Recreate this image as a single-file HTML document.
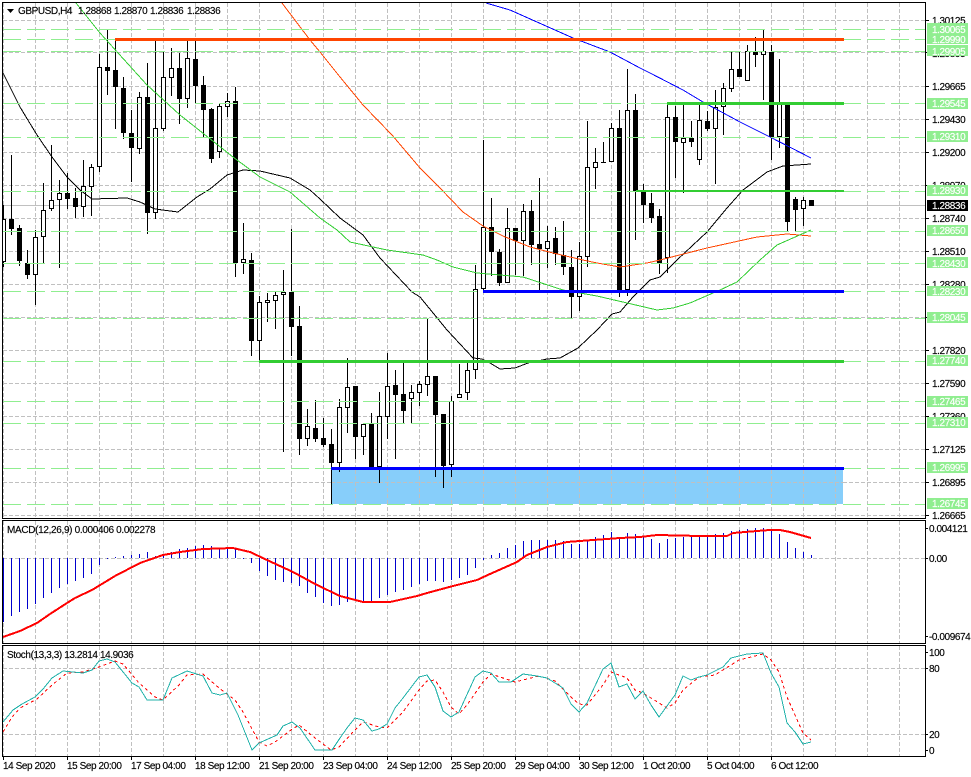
<!DOCTYPE html>
<html><head><meta charset="utf-8"><title>GBPUSD,H4</title>
<style>
html,body{margin:0;padding:0;background:#fff;width:971px;height:777px;overflow:hidden}
svg{display:block}
text{font-family:"Liberation Sans",sans-serif;font-size:10px;letter-spacing:-.42px;fill:#000;stroke:#000;stroke-width:.15}
.c{shape-rendering:crispEdges}
.g{stroke:#c0c0c0;stroke-width:1;stroke-dasharray:4 2;fill:none}
.l{stroke:#90ee90;stroke-width:1;stroke-dasharray:18 6;fill:none}
.m{fill:none;stroke-width:1;stroke-linejoin:round;shape-rendering:crispEdges}
text.w{fill:#fff;stroke:#fff}
</style></head><body>
<svg width="971" height="777" viewBox="0 0 971 777" xmlns="http://www.w3.org/2000/svg">
<defs>
<clipPath id="a"><rect x="3" y="3" width="922" height="515"/></clipPath>
<clipPath id="b"><rect x="3" y="521" width="922" height="122"/></clipPath>
<clipPath id="d"><rect x="3" y="646" width="922" height="110"/></clipPath>
</defs>

<!-- main grid -->
<g class="c">
<path class="g" d="M3 20.5H925M3 52.5H925M3 86.5H925M3 119.5H925M3 152.5H925M3 185.5H925M3 218.5H925M3 251.5H925M3 284.5H925M3 317.5H925M3 350.5H925M3 383.5H925M3 416.5H925M3 449.5H925M3 482.5H925M3 515.5H925"/>
<path class="g" d="M3.5 3V518M35.5 3V518M67.5 3V518M99.5 3V518M131.5 3V518M163.5 3V518M195.5 3V518M227.5 3V518M259.5 3V518M291.5 3V518M323.5 3V518M355.5 3V518M387.5 3V518M419.5 3V518M451.5 3V518M483.5 3V518M515.5 3V518M547.5 3V518M579.5 3V518M611.5 3V518M643.5 3V518M675.5 3V518M707.5 3V518M739.5 3V518M771.5 3V518M803.5 3V518M835.5 3V518M867.5 3V518M899.5 3V518"/>
<path d="M3 205.5H925" stroke="#c0c0c0" fill="none"/>
<rect x="331" y="470" width="512" height="34" fill="#87cefa"/>
<path d="M331 482.5H843" stroke="#c0c0c0" stroke-dasharray="4 2" fill="none"/>
<path d="M355.5 470V504M387.5 470V504M419.5 470V504M451.5 470V504M483.5 470V504M515.5 470V504M547.5 470V504M579.5 470V504M611.5 470V504M643.5 470V504M675.5 470V504M707.5 470V504M739.5 470V504M771.5 470V504M803.5 470V504M835.5 470V504" stroke="#c0c0c0" stroke-dasharray="4 2" fill="none"/>
</g>

<!-- candles -->
<g clip-path="url(#a)" class="c">
<path fill="none" stroke="#000" d="M3.5 205V267M11.5 155V235M19.5 225V266M27.5 250V279M35.5 230V305M43.5 183V263M51.5 145V211M59.5 180V268M67.5 173V209M75.5 188V218M83.5 160V217M91.5 164V216M99.5 54V172M107.5 30V95M115.5 39V129M123.5 77V139M131.5 110V182M139.5 92V154M147.5 63V234M155.5 40V219M163.5 52V131M171.5 48V96M179.5 53V124M187.5 39V108M195.5 40V103M203.5 76V137M211.5 108V163M219.5 103V158M227.5 93V117M235.5 87V277M243.5 223V274M251.5 253V356M259.5 296V361M267.5 293V322M275.5 292V329M283.5 270V452M291.5 229V356M299.5 306V455M307.5 409V446M315.5 400V442M323.5 418V447M331.5 429V504M339.5 399V472M347.5 358V433M355.5 386V459M363.5 424V455M371.5 413V467M379.5 392V483M387.5 353V439M395.5 370V459M403.5 363V423M411.5 385V423M419.5 381V406M427.5 319V396M435.5 376V477M443.5 414V488M451.5 396V477M459.5 364V398M467.5 363V400M475.5 265V379M483.5 140V293M491.5 198V276M499.5 249V286M507.5 208V283M515.5 228V275M523.5 204V276M531.5 200V265M539.5 178V293M547.5 226V268M555.5 227V265M563.5 221V275M571.5 250V318M579.5 242V311M587.5 121V267M595.5 148V189M603.5 142V163M611.5 123V162M619.5 110V297M627.5 69V296M635.5 94V240M643.5 184V223M651.5 193V223M659.5 209V274M667.5 103V273M675.5 106V178M683.5 105V193M691.5 121V147M699.5 102V165M707.5 111V131M715.5 90V184M723.5 83V135M731.5 52V92M739.5 52V77M747.5 45V81M755.5 37V67M763.5 30V100M771.5 45V160M779.5 59V148M787.5 104V231M795.5 197V231M803.5 197V226M811.5 200V206"/>
<path fill="#000" d="M9 219h5v10h-5zM17 228h5v33h-5zM25 263h5v12h-5zM65 193h5v6h-5zM73 198h5v9h-5zM105 67h5v4h-5zM113 70h5v17h-5zM121 88h5v45h-5zM129 133h5v15h-5zM145 97h5v116h-5zM177 68h5v31h-5zM193 59h5v27h-5zM201 85h5v25h-5zM209 109h5v50h-5zM233 101h5v162h-5zM249 260h5v81h-5zM289 292h5v35h-5zM297 326h5v113h-5zM313 428h5v11h-5zM321 438h5v7h-5zM329 444h5v19h-5zM353 386h5v51h-5zM369 423h5v44h-5zM393 385h5v10h-5zM401 394h5v17h-5zM433 376h5v39h-5zM441 414h5v52h-5zM489 227h5v25h-5zM497 252h5v31h-5zM513 228h5v13h-5zM529 211h5v34h-5zM537 244h5v5h-5zM553 238h5v16h-5zM561 255h5v12h-5zM569 267h5v30h-5zM617 128h5v162h-5zM633 110h5v82h-5zM641 192h5v13h-5zM649 203h5v15h-5zM657 216h5v47h-5zM673 117h5v25h-5zM689 138h5v4h-5zM705 121h5v8h-5zM737 69h5v8h-5zM753 51h5v4h-5zM769 52h5v85h-5zM785 104h5v118h-5zM793 199h5v11h-5zM809 200h5v6h-5z"/>
<path fill="#fff" stroke="#000" d="M1.5 219.5h4v42h-4zM33.5 237.5h4v37h-4zM41.5 210.5h4v26h-4zM49.5 200.5h4v8h-4zM57.5 193.5h4v6h-4zM81.5 186.5h4v20h-4zM89.5 167.5h4v19h-4zM97.5 67.5h4v99h-4zM137.5 97.5h4v51h-4zM153.5 128.5h4v84h-4zM161.5 77.5h4v51h-4zM169.5 68.5h4v9h-4zM185.5 58.5h4v40h-4zM217.5 106.5h4v45h-4zM225.5 101.5h4v5h-4zM241.5 259.5h4v3h-4zM257.5 302.5h4v38h-4zM265.5 300.5h4v2h-4zM273.5 295.5h4v5h-4zM281.5 292.5h4v2h-4zM305.5 426.5h4v12h-4zM337.5 407.5h4v55h-4zM345.5 387.5h4v20h-4zM361.5 424.5h4v12h-4zM377.5 416.5h4v50h-4zM385.5 386.5h4v30h-4zM409.5 392.5h4v6h-4zM417.5 384.5h4v8h-4zM425.5 376.5h4v8h-4zM449.5 401.5h4v63h-4zM457.5 394.5h4v3h-4zM465.5 370.5h4v22h-4zM473.5 289.5h4v80h-4zM481.5 227.5h4v61h-4zM505.5 228.5h4v54h-4zM521.5 211.5h4v29h-4zM545.5 241.5h4v7h-4zM577.5 256.5h4v40h-4zM585.5 167.5h4v89h-4zM593.5 162.5h4v5h-4zM609.5 128.5h4v33h-4zM625.5 110.5h4v179h-4zM665.5 117.5h4v140h-4zM681.5 138.5h4v4h-4zM697.5 120.5h4v39h-4zM713.5 107.5h4v21h-4zM721.5 88.5h4v18h-4zM729.5 69.5h4v19h-4zM745.5 51.5h4v29h-4zM761.5 51.5h4v3h-4zM777.5 104.5h4v32h-4zM801.5 200.5h4v8h-4z"/>
<path fill="none" stroke="#000" d="M601 162.5h5"/>
</g>

<!-- moving averages -->
<g clip-path="url(#a)">
<polyline class="m" stroke="#0000ff" points="486,3 510,10 537,22 573,38 610,52 640,68 650,73 683,90 703,102 740,122 770,137 811,158"/>
<polyline class="m" stroke="#000" points="3,73 20,107 37,135 52,157 67,177 80,190 92,199 127,198 140,202 155,209 178,212 197,197 210,189 227,175 243,170 260,171 290,178 310,190 320,199 340,218 363,235 380,258 412,292 420,297 447,330 473,358 482,359 490,363 500,369 515,368 528,363 547,359 560,358 578,348 597,330 612,314 620,312 633,297 650,280 660,277 677,260 707,232 727,208 743,190 767,172 783,166 811,164"/>
<polyline class="m" stroke="#ff4500" points="282,3 310,40 320,52 340,77 363,105 392,135 420,168 440,188 463,212 483,226 503,236 530,247 553,253 583,260 597,263 620,267 647,263 660,260 707,248 757,237 787,234 811,236"/>
<polyline class="m" stroke="#32cd32" points="76,3 100,33 147,85 180,115 233,157 260,177 290,192 320,218 337,230 350,242 387,250 423,255 437,260 453,267 477,273 523,277 563,290 597,296 640,306 657,310 673,308 690,303 720,290 737,282 760,260 777,245 811,230"/>
</g>

<!-- horizontal levels -->
<g class="c">
<path class="l" d="M3 29.5H925M3 39.5H925M3 51.5H925M3 103.5H925M3 137.5H925M3 191.5H925M3 231.5H925M3 263.5H925M3 291.5H925M3 318.5H925M3 361.5H925M3 401.5H925M3 423.5H925M3 468.5H925M3 504.5H925"/>
<rect x="115" y="38" width="729" height="3" fill="#ff4500"/>
<rect x="667" y="102" width="177" height="3" fill="#32cd32"/>
<rect x="636" y="190" width="208" height="2" fill="#32cd32"/>
<rect x="483" y="290" width="361" height="3" fill="#0000ff"/>
<rect x="259" y="360" width="585" height="3" fill="#32cd32"/>
<rect x="331" y="467" width="513" height="3" fill="#0000ff"/>
</g>

<!-- MACD -->
<g class="c">
<path class="g" d="M3 558.5H925"/>
<path class="g" d="M3.5 521V643M35.5 521V643M67.5 521V643M99.5 521V643M131.5 521V643M163.5 521V643M195.5 521V643M227.5 521V643M259.5 521V643M291.5 521V643M323.5 521V643M355.5 521V643M387.5 521V643M419.5 521V643M451.5 521V643M483.5 521V643M515.5 521V643M547.5 521V643M579.5 521V643M611.5 521V643M643.5 521V643M675.5 521V643M707.5 521V643M739.5 521V643M771.5 521V643M803.5 521V643M835.5 521V643M867.5 521V643M899.5 521V643"/>
<path fill="none" stroke="#0000cd" d="M3.5 558V622M11.5 558V616M19.5 558V612M27.5 558V609M35.5 558V604M43.5 558V598M51.5 558V593M59.5 558V588M67.5 558V584M75.5 558V581M83.5 558V578M91.5 558V574M99.5 558V565M107.5 558V559M115.5 558V557M123.5 558V556M131.5 558V555M139.5 558V554M147.5 558V552M155.5 558V556M163.5 558V555M171.5 558V552M179.5 558V549M187.5 558V548M195.5 558V546M203.5 558V545M211.5 558V546M219.5 558V549M227.5 558V549M235.5 558V549M243.5 558V559M251.5 558V563M259.5 558V571M267.5 558V576M275.5 558V580M283.5 558V582M291.5 558V583M299.5 558V586M307.5 558V593M315.5 558V597M323.5 558V603M331.5 558V606M339.5 558V605M347.5 558V602M355.5 558V601M363.5 558V601M371.5 558V601M379.5 558V598M387.5 558V595M395.5 558V592M403.5 558V590M411.5 558V587M419.5 558V584M427.5 558V581M435.5 558V581M443.5 558V582M451.5 558V580M459.5 558V578M467.5 558V575M475.5 558V568M483.5 558V560M491.5 558V555M499.5 558V553M507.5 558V548M515.5 558V545M523.5 558V541M531.5 558V540M539.5 558V540M547.5 558V540M555.5 558V540M563.5 558V541M571.5 558V544M579.5 558V544M587.5 558V541M595.5 558V537M603.5 558V535M611.5 558V532M619.5 558V538M627.5 558V533M635.5 558V534M643.5 558V536M651.5 558V539M659.5 558V543M667.5 558V539M675.5 558V538M683.5 558V537M691.5 558V537M699.5 558V536M707.5 558V535M715.5 558V534M723.5 558V533M731.5 558V531M739.5 558V530M747.5 558V529M755.5 558V528M763.5 558V528M771.5 558V531M779.5 558V534M787.5 558V542M795.5 558V548M803.5 558V552M811.5 558V555"/>
</g>
<polyline clip-path="url(#b)" class="c" fill="none" stroke="#ff0000" stroke-width="2" stroke-linejoin="round" points="3,637 20,631 37,623 50,614 67,603 75,598 92,590 115,576 140,563 163,555 180,552 203,549 233,548 250,552 267,560 293,572 317,585 340,596 363,602 390,602 417,596 427,593 453,586 477,580 490,574 517,562 527,555 547,547 567,542 593,540 620,538 640,537 657,535 700,536 727,536 733,533 757,531 770,530 780,530 790,532 811,538"/>

<!-- Stoch -->
<g class="c">
<path class="g" d="M3 668.5H925M3 734.5H925"/>
<path class="g" d="M3.5 646V756M35.5 646V756M67.5 646V756M99.5 646V756M131.5 646V756M163.5 646V756M195.5 646V756M227.5 646V756M259.5 646V756M291.5 646V756M323.5 646V756M355.5 646V756M387.5 646V756M419.5 646V756M451.5 646V756M483.5 646V756M515.5 646V756M547.5 646V756M579.5 646V756M611.5 646V756M643.5 646V756M675.5 646V756M707.5 646V756M739.5 646V756M771.5 646V756M803.5 646V756M835.5 646V756M867.5 646V756M899.5 646V756"/>
</g>
<g clip-path="url(#d)" class="c">
<polyline fill="none" stroke="#ff0000" stroke-dasharray="3 3" points="3,732 12,717 20,708 37,699 52,685 67,673 83,672 99,667 115,661 123,664 139,683 155,697 163,700 179,685 187,675 203,674 219,688 235,700 243,712 259,742 267,746 275,742 291,730 299,725 315,738 331,750 339,747 355,730 363,722 379,727 387,728 403,712 419,690 427,681 435,680 443,692 451,707 459,714 467,705 483,682 491,674 515,682 531,678 539,676 555,681 571,697 579,704 587,705 603,685 611,672 627,678 635,690 643,693 659,703 667,708 675,703 683,690 699,677 715,675 739,660 763,654 771,660 779,672 787,697 795,715 803,733 811,740"/>
<polyline fill="none" stroke="#20b2aa" points="3,722 13,710 22,704 35,697 43,689 52,678 63,671 83,673 92,670 99,661 107,659 115,662 132,683 139,687 147,700 163,700 172,678 187,671 203,676 212,693 220,695 227,693 238,715 252,750 259,743 277,735 283,726 292,722 300,728 315,750 332,750 340,738 347,728 355,718 363,720 372,731 379,729 387,724 395,708 403,698 419,677 427,675 435,687 443,711 451,717 459,712 475,677 483,671 491,673 499,682 511,682 523,674 537,676 547,678 563,688 571,704 579,712 587,703 603,669 611,663 619,687 627,684 635,699 643,691 651,705 659,717 675,695 683,676 691,680 699,677 707,675 723,667 731,658 739,656 747,654 763,653 771,673 779,687 787,723 795,732 803,744 811,742"/>
</g>

<!-- frames -->
<g class="c" fill="none" stroke="#000">
<path d="M2.5 2.5H925.5V518.5H2.5Z"/>
<path d="M2.5 520.5H925.5V643.5H2.5Z"/>
<path d="M2.5 645.5H925.5V756.5H2.5Z"/>
<path d="M925 20.5h4M925 52.5h4M925 86.5h4M925 119.5h4M925 152.5h4M925 185.5h4M925 218.5h4M925 251.5h4M925 284.5h4M925 317.5h4M925 350.5h4M925 383.5h4M925 416.5h4M925 449.5h4M925 482.5h4M925 515.5h4M925 528.5h3M925 558.5h3M925 636.5h3M925 652.5h3M925 668.5h3M925 734.5h3M925 750.5h3"/>
<path d="M3.5 756v4M67.5 756v4M131.5 756v4M195.5 756v4M259.5 756v4M323.5 756v4M387.5 756v4M451.5 756v4M515.5 756v4M579.5 756v4M643.5 756v4M707.5 756v4M771.5 756v4"/>
</g>

<!-- price axis -->
<g>
<text x="932" y="24">1.30125</text>
<text x="932" y="57">1.29895</text>
<text x="932" y="90">1.29665</text>
<text x="932" y="123">1.29430</text>
<text x="932" y="156">1.29200</text>
<text x="932" y="189">1.28970</text>
<text x="932" y="222">1.28740</text>
<text x="932" y="255">1.28510</text>
<text x="932" y="288">1.28280</text>
<text x="932" y="321">1.28045</text>
<text x="932" y="354">1.27820</text>
<text x="932" y="387">1.27590</text>
<text x="932" y="420">1.27360</text>
<text x="932" y="453">1.27125</text>
<text x="932" y="486">1.26895</text>
<text x="932" y="519">1.26665</text>
</g>
<g class="c" fill="#90ee90">
<rect x="927" y="23" width="41" height="21"/>
<rect x="927" y="45" width="41" height="11"/>
<rect x="927" y="98" width="41" height="11"/>
<rect x="927" y="131" width="41" height="11"/>
<rect x="927" y="185" width="41" height="11"/>
<rect x="927" y="225" width="41" height="11"/>
<rect x="927" y="257" width="41" height="11"/>
<rect x="927" y="286" width="41" height="10"/>
<rect x="927" y="312" width="41" height="11"/>
<rect x="927" y="355" width="41" height="11"/>
<rect x="927" y="396" width="41" height="11"/>
<rect x="927" y="417" width="41" height="11"/>
<rect x="927" y="462" width="41" height="11"/>
<rect x="927" y="498" width="41" height="11"/>
<rect x="927" y="200" width="41" height="11" fill="#000"/>
</g>
<g>
<text class="w" x="932" y="33">1.30065</text>
<text class="w" x="932" y="43">1.29990</text>
<text class="w" x="932" y="55">1.29905</text>
<text class="w" x="932" y="107">1.29545</text>
<text class="w" x="932" y="140">1.29310</text>
<text class="w" x="932" y="194">1.28930</text>
<text class="w" x="932" y="234">1.28650</text>
<text class="w" x="932" y="267">1.28430</text>
<text class="w" x="932" y="295">1.28230</text>
<text class="w" x="932" y="321">1.28045</text>
<text class="w" x="932" y="364">1.27740</text>
<text class="w" x="932" y="405">1.27465</text>
<text class="w" x="932" y="426">1.27310</text>
<text class="w" x="932" y="471">1.26995</text>
<text class="w" x="932" y="507">1.26745</text>
<text class="w" x="932" y="209">1.28836</text>
</g>

<!-- indicator axes -->
<text x="929" y="532">0.004121</text>
<text x="929" y="562">0.00</text>
<text x="929" y="640">-0.009674</text>
<text x="929" y="656">100</text>
<text x="929" y="672">80</text>
<text x="929" y="738">20</text>
<text x="929" y="754">0</text>

<!-- titles -->
<path d="M7 9h7l-3.5 4z" fill="#000"/>
<text x="18" y="14">GBPUSD,H4</text>
<text x="78" y="14">1.28868</text>
<text x="114" y="14">1.28870</text>
<text x="150" y="14">1.28836</text>
<text x="187" y="14">1.28836</text>
<text x="7" y="533" style="letter-spacing:-.33px">MACD(12,26,9) 0.000406 0.002278</text>
<text x="7" y="658" style="letter-spacing:-.4px">Stoch(13,3,3) 13.2814 14.9036</text>

<!-- time axis -->
<g>
<text x="3" y="769">14 Sep 2020</text>
<text x="67" y="769">15 Sep 20:00</text>
<text x="131" y="769">17 Sep 04:00</text>
<text x="195" y="769">18 Sep 12:00</text>
<text x="259" y="769">21 Sep 20:00</text>
<text x="323" y="769">23 Sep 04:00</text>
<text x="387" y="769">24 Sep 12:00</text>
<text x="451" y="769">25 Sep 20:00</text>
<text x="515" y="769">29 Sep 04:00</text>
<text x="579" y="769">30 Sep 12:00</text>
<text x="643" y="769">1 Oct 20:00</text>
<text x="707" y="769">5 Oct 04:00</text>
<text x="771" y="769">6 Oct 12:00</text>
</g>
</svg>
</body></html>
